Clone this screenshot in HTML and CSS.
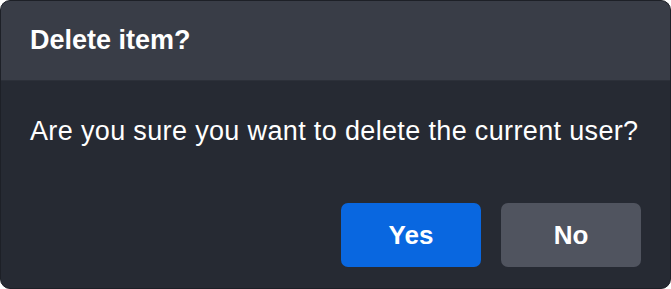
FILE: index.html
```html
<!DOCTYPE html>
<html>
<head>
<meta charset="utf-8">
<link rel="stylesheet" href="styles.css">
</head>
<body>
<div class="dialog">
  <div class="dialog-header">
    <h2 class="dialog-title">Delete item?</h2>
  </div>
  <div class="dialog-body">
    <p class="dialog-message">Are you sure you want to delete the current user?</p>
    <div class="dialog-actions">
      <button class="btn btn-primary">Yes</button>
      <button class="btn btn-secondary">No</button>
    </div>
  </div>
</div>
</body>
</html>
```
FILE: styles.css
```css
html, body {
  margin: 0;
  padding: 0;
  background: #ffffff;
}
body {
  font-family: "Liberation Sans", Arial, sans-serif;
  width: 671px;
  height: 289px;
}
.dialog {
  box-sizing: border-box;
  width: 671px;
  height: 289px;
  border: 1px solid #1d2027;
  border-radius: 10px;
  background: #262a33;
  overflow: hidden;
  display: flex;
  flex-direction: column;
}
.dialog-header {
  box-sizing: border-box;
  height: 80px;
  background: #393d47;
  border-bottom: 1px solid #2c3039;
  display: flex;
  align-items: center;
  padding: 0 29px;
}
.dialog-title {
  margin: 0;
  font-size: 27px;
  font-weight: 700;
  color: #ffffff;
}
.dialog-body {
  flex: 1;
  display: flex;
  flex-direction: column;
  padding: 30px 29px 21px;
}
.dialog-message {
  margin: 0;
  font-size: 27px;
  letter-spacing: 0.35px;
  line-height: 40px;
  white-space: nowrap;
  color: #ffffff;
}
.dialog-actions {
  margin-top: auto;
  display: flex;
  justify-content: flex-end;
  gap: 20px;
}
.btn {
  width: 140px;
  height: 64px;
  border: none;
  border-radius: 7px;
  font-family: "Liberation Sans", Arial, sans-serif;
  font-size: 26px;
  font-weight: 700;
  color: #ffffff;
  cursor: pointer;
}
.btn-primary {
  background: #0967e0;
}
.btn-secondary {
  background: #50545f;
}
```
